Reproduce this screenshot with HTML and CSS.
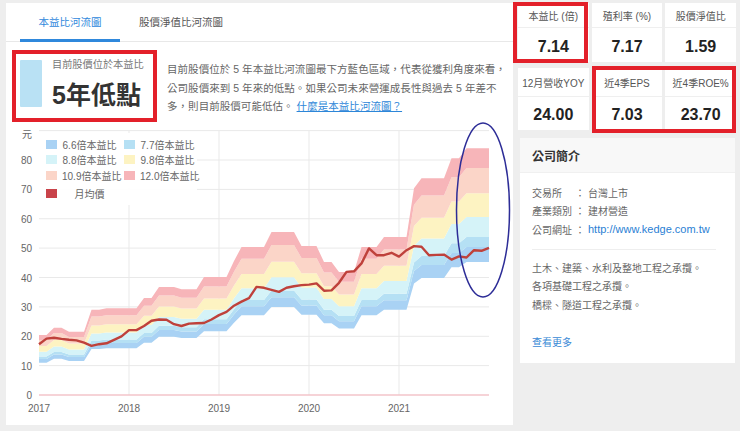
FILE: index.html
```html
<!DOCTYPE html>
<html lang="zh-Hant">
<head>
<meta charset="utf-8">
<title>本益比河流圖</title>
<link rel="stylesheet" href="styles.css">
</head>
<body>
<div class="page">
  <section class="river-card">
    <nav class="tabs">
      <a class="tab active">本益比河流圖</a>
      <a class="tab">股價淨值比河流圖</a>
    </nav>
    <div class="summary">
      <div class="level">
        <div class="level-bar"></div>
        <div class="level-text">
          <div class="level-caption">目前股價位於本益比</div>
          <div class="level-value">5年低點</div>
        </div>
      </div>
      <p class="summary-desc">目前股價位於 5 年本益比河流圖最下方藍色區域，代表從獲利角度來看，<br>公司股價來到 5 年來的低點。如果公司未來營運成長性與過去 5 年差不<br>多，則目前股價可能低估。 <a class="help-link">什麼是本益比河流圖？</a></p>
    </div>
    <div class="chart">
      <svg class="chart-svg" width="507" height="300" viewBox="6 125 507 300">
        <g class="grid">
          <line x1="39" y1="130.6" x2="489" y2="130.6"/>
          <line x1="39" y1="160" x2="489" y2="160"/>
          <line x1="39" y1="189.4" x2="489" y2="189.4"/>
          <line x1="39" y1="218.75" x2="489" y2="218.75"/>
          <line x1="39" y1="248.1" x2="489" y2="248.1"/>
          <line x1="39" y1="277.5" x2="489" y2="277.5"/>
          <line x1="39" y1="306.9" x2="489" y2="306.9"/>
          <line x1="39" y1="336.3" x2="489" y2="336.3"/>
          <line x1="39" y1="365.6" x2="489" y2="365.6"/>
          <line x1="129" y1="130.6" x2="129" y2="395"/>
          <line x1="219" y1="130.6" x2="219" y2="395"/>
          <line x1="309" y1="130.6" x2="309" y2="395"/>
          <line x1="399" y1="130.6" x2="399" y2="395"/>
        </g>
        <g id="bands"></g>
        <line class="zero-line" x1="39" y1="395" x2="489" y2="395"/>
        <polyline id="price" class="price-line" points=""/>
        <g class="y-labels">
          <text x="32" y="138">元</text>
          <text x="32" y="164">80</text>
          <text x="32" y="193.4">70</text>
          <text x="32" y="222.75">60</text>
          <text x="32" y="252.1">50</text>
          <text x="32" y="281.5">40</text>
          <text x="32" y="310.9">30</text>
          <text x="32" y="340.3">20</text>
          <text x="32" y="369.6">10</text>
          <text x="32" y="399">0</text>
        </g>
        <g class="x-labels">
          <text x="39" y="412">2017</text>
          <text x="129" y="412">2018</text>
          <text x="219" y="412">2019</text>
          <text x="309" y="412">2020</text>
          <text x="399" y="412">2021</text>
        </g>
      </svg>
      <ul class="legend">
        <li><span class="sw sw-0"></span><span class="lg-text">6.6倍本益比</span></li>
        <li><span class="sw sw-1"></span><span class="lg-text">7.7倍本益比</span></li>
        <li><span class="sw sw-2"></span><span class="lg-text">8.8倍本益比</span></li>
        <li><span class="sw sw-3"></span><span class="lg-text">9.8倍本益比</span></li>
        <li><span class="sw sw-4"></span><span class="lg-text">10.9倍本益比</span></li>
        <li><span class="sw sw-5"></span><span class="lg-text">12.0倍本益比</span></li>
        <li class="lg-price"><span class="sw sw-price"></span><span class="lg-text">月均價</span></li>
      </ul>
    </div>
  </section>

  <aside class="side">
    <div class="stats">
      <div class="stat"><div class="stat-label">本益比 (倍)</div><div class="stat-value">7.14</div></div>
      <div class="stat"><div class="stat-label">殖利率 (%)</div><div class="stat-value">7.17</div></div>
      <div class="stat"><div class="stat-label">股價淨值比</div><div class="stat-value">1.59</div></div>
      <div class="stat stat-low"><div class="stat-label">12月營收YOY</div><div class="stat-value">24.00</div></div>
      <div class="stat stat-low"><div class="stat-label">近4季EPS</div><div class="stat-value">7.03</div></div>
      <div class="stat stat-low"><div class="stat-label">近4季ROE%</div><div class="stat-value">23.70</div></div>
    </div>
    <div class="company">
      <div class="company-head">公司簡介</div>
      <div class="company-body">
        <div class="info-row"><span class="info-label">交易所</span><span class="info-colon">：</span><span class="info-value">台灣上市</span></div>
        <div class="info-row"><span class="info-label">產業類別</span><span class="info-colon">：</span><span class="info-value">建材營造</span></div>
        <div class="info-row"><span class="info-label">公司網址</span><span class="info-colon">：</span><a class="info-link">http://www.kedge.com.tw</a></div>
        <div class="divider"></div>
        <p class="company-desc">土木、建築、水利及整地工程之承攬。<br>各項基礎工程之承攬。<br>橋樑、隧道工程之承攬。</p>
        <a class="more-link">查看更多</a>
      </div>
    </div>
  </aside>

  <div class="mark mark-level"></div>
  <div class="mark mark-pe"></div>
  <div class="mark mark-eps"></div>
  <svg class="ellipse-mark" width="60" height="180" viewBox="0 0 60 180"><ellipse cx="30" cy="89" rx="26.5" ry="87"/></svg>
</div>
<script src="script.js"></script>
</body>
</html>
```

FILE: styles.css
```css
* { box-sizing: border-box; }
html, body { margin: 0; padding: 0; }
body {
  background: #eeeeee;
  font-family: "Liberation Sans", "Noto Sans CJK TC", sans-serif;
  color: #555;
}
.page {
  position: relative;
  width: 740px;
  height: 431px;
  display: flex;
  align-items: flex-start;
  gap: 5px;
  padding: 3px 0 0 6px;
  overflow: hidden;
}

/* left card */
.river-card {
  width: 507px;
  height: 422px;
  background: #fff;
  display: flex;
  flex-direction: column;
}
.tabs {
  display: flex;
  gap: 11px;
  padding-left: 14px;
  height: 39px;
  border-bottom: 1px solid #e8e8e8;
}
.tab {
  width: 100px;
  height: 39px;
  margin-bottom: -1px;
  display: flex;
  align-items: center;
  justify-content: center;
  font-size: 10.5px;
  color: #555;
  border-bottom: 3px solid transparent;
  padding-top: 1px;
}
.tab.active {
  color: #2f88dc;
  border-bottom-color: #2f88dc;
}

.summary {
  height: 83px;
  display: flex;
  align-items: flex-start;
  gap: 15px;
  padding: 16px 2px 0 14px;
}
.level {
  width: 132px;
  display: flex;
  gap: 10px;
  flex-shrink: 0;
}
.level-bar {
  width: 22px;
  height: 47px;
  margin-top: 2px;
  background: #b9e1f4;
  border-radius: 1px;
}
.level-caption {
  font-size: 10.2px;
  line-height: 14px;
  color: #777;
}
.level-value {
  margin-top: 8px;
  font-size: 25px;
  line-height: 30px;
  font-weight: bold;
  color: #333;
}
.summary-desc {
  margin: 0;
  padding-top: 2px;
  font-size: 10.5px;
  line-height: 18.5px;
  letter-spacing: 0.05px;
  color: #666;
  white-space: nowrap;
}
.help-link {
  color: #2d86d8;
  text-decoration: underline;
}

.chart {
  position: relative;
  height: 300px;
}
.chart-svg { display: block; }
.grid line { stroke: #e9e9e9; stroke-width: 1; }
.zero-line { stroke: #f3c4ca; stroke-width: 1.5; }
.price-line {
  fill: none;
  stroke: #bf413b;
  stroke-width: 2.4;
  stroke-linejoin: round;
}
.y-labels text, .x-labels text {
  font-family: "Liberation Sans", "Noto Sans CJK TC", sans-serif;
  font-size: 10px;
  fill: #666;
}
.y-labels text { text-anchor: end; }
.x-labels text { text-anchor: middle; }

.band-0 { fill: #a9d2f4; }
.band-1 { fill: #b5e0f4; }
.band-2 { fill: #d5f3f8; }
.band-3 { fill: #fdf3c2; }
.band-4 { fill: #fbd5c8; }
.band-5 { fill: #f7b5b9; }

.legend {
  position: absolute;
  left: 33px;
  top: 8px;
  width: 158px;
  margin: 0;
  padding: 4px 0 4px;
  list-style: none;
  display: grid;
  grid-template-columns: 78px 78px;
  background: rgba(255, 255, 255, 0.92);
}
.legend li {
  display: flex;
  align-items: center;
  height: 15.3px;
  padding-left: 7px;
  gap: 5px;
}
.legend .lg-price { margin-top: 2.5px; }
.sw {
  width: 11px;
  height: 9px;
  flex-shrink: 0;
}
.sw-0 { background: #a9d2f4; }
.sw-1 { background: #b5e0f4; }
.sw-2 { background: #d5f3f8; }
.sw-3 { background: #fdf3c2; }
.sw-4 { background: #fbd5c8; }
.sw-5 { background: #f7b5b9; }
.sw-price { background: #c9434a; }
.lg-text {
  width: 55px;
  text-align: center;
  font-size: 10px;
  color: #666;
  white-space: nowrap;
}

/* right column */
.side {
  width: 218px;
  display: flex;
  flex-direction: column;
  gap: 8px;
}
.stats {
  display: grid;
  grid-template-columns: repeat(3, 1fr);
  column-gap: 3px;
  row-gap: 6px;
}
.stat {
  background: #fff;
  display: flex;
  flex-direction: column;
}
.stat-label {
  height: 25px;
  display: flex;
  align-items: center;
  justify-content: center;
  font-size: 10px;
  color: #555;
  border-bottom: 1px solid #efefef;
  white-space: nowrap;
}
.stat-value {
  height: 34px;
  display: flex;
  align-items: center;
  justify-content: center;
  font-size: 16px;
  font-weight: bold;
  color: #222;
  padding-top: 3px;
}
.stat-low .stat-label { height: 29px; }
.stat-low .stat-value { height: 33px; }

.company {
  margin: 0 1px 0 2px;
  height: 225px;
  background: #fff;
}
.company-head {
  height: 35px;
  display: flex;
  align-items: center;
  padding-left: 12px;
  background: #f8f8f8;
  border-bottom: 1px solid #f0f0f0;
  font-size: 12px;
  font-weight: bold;
  color: #333;
}
.company-body {
  padding: 10px 19px 0 12px;
}
.info-row {
  display: flex;
  align-items: center;
  height: 18.5px;
  font-size: 10px;
  color: #666;
  white-space: nowrap;
}
.info-label { width: 40px; }
.info-colon { width: 16px; text-align: center; }
.info-link {
  font-size: 11px;
  color: #2a80d4;
}
.divider {
  margin: 10px 0;
  border-top: 1px solid #eeeeee;
}
.company-desc {
  margin: 0;
  font-size: 10px;
  line-height: 18.5px;
  color: #666;
}
.more-link {
  display: block;
  margin-top: 19px;
  font-size: 10px;
  line-height: 18.5px;
  color: #3a8ad6;
}

/* annotations */
.mark {
  position: absolute;
  border: 4px solid #e3202a;
}
.mark-level { left: 12px; top: 50px; width: 145px; height: 72px; }
.mark-pe { left: 513px; top: 2px; width: 75px; height: 61px; }
.mark-eps { left: 592px; top: 66px; width: 144px; height: 67px; }
.ellipse-mark {
  position: absolute;
  left: 453px;
  top: 121px;
}
.ellipse-mark ellipse {
  fill: none;
  stroke: #2d2d97;
  stroke-width: 1.5;
}
```

FILE: script.js
```js
(function () {
  var T = [20.4, 20.4, 22.9, 22.9, 21.5, 21.5, 21.5, 29, 29, 29.5,
           29.5, 29.5, 29.5, 29.5, 33, 33, 36.8, 36.8, 36.8, 36,
           36, 36, 40.2, 40.2, 40.2, 40.2, 45.6, 50.4, 50.4, 50.4,
           50.4, 55.5, 55.5, 55.5, 55.5, 50.7, 50.7, 50.7, 45.3, 45.3,
           41.9, 41.9, 41.9, 50.4, 50.4, 50.4, 53.8, 53.8, 53.8, 53.8,
           70.4, 73.8, 73.8, 73.8, 73.8, 80.6, 80.6, 84, 84, 84, 84];
  var P = [17.3, 19.2, 19.5, 19.1, 18.8, 18.6, 17.8, 16.7, 17.3, 17.6,
           18.8, 20, 22.1, 22.1, 23.5, 25.3, 25.7, 25.6, 24.1, 23.5,
           24.3, 24.4, 24.5, 25.7, 27.2, 28.3, 30.4, 31.8, 33, 36.8,
           36.5, 35.8, 35.1, 36.5, 37, 37.4, 37.6, 38, 35.5, 35.6,
           38.2, 41.9, 42.1, 44.8, 49.9, 47.6, 47.6, 48.4, 47.1, 49.3,
           50.7, 50.5, 47.6, 47.7, 47.8, 46.1, 47.2, 46.8, 49.3, 49.1, 50.1];
  var m = [6.47, 7.2, 7.69, 8.66, 9.81, 11.04, 12];
  var ns = 'http://www.w3.org/2000/svg';
  function X(i) { return 39 + 7.5 * i; }
  function Y(v) { return (395 - 2.9375 * v).toFixed(1); }
  var bands = document.getElementById('bands');
  for (var k = 0; k < 6; k++) {
    var pts = [];
    var i;
    for (i = 0; i < T.length; i++) pts.push(X(i) + ',' + Y(T[i] * m[k + 1] / 12));
    for (i = T.length - 1; i >= 0; i--) pts.push(X(i) + ',' + Y(T[i] * m[k] / 12));
    var poly = document.createElementNS(ns, 'polygon');
    poly.setAttribute('points', pts.join(' '));
    poly.setAttribute('class', 'band band-' + k);
    bands.appendChild(poly);
  }
  var line = document.getElementById('price');
  line.setAttribute('points', P.map(function (v, j) { return X(j) + ',' + Y(v); }).join(' '));
})();
```
